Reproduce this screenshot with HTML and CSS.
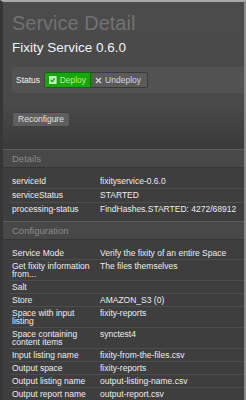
FILE: index.html
```html
<!DOCTYPE html>
<html lang="en">
<head>
  <meta charset="UTF-8" />
  <title>Service Detail</title>
  <link rel="stylesheet" href="styles.css">
</head>
<body>
  <div class="panel">
    <div class="head">
      <h1 class="title">Service Detail</h1>
      <h2 class="subtitle">Fixity Service 0.6.0</h2>

      <div class="status-bar">
        <span class="status-label">Status</span>
        <span class="toggle">
          <button class="tbtn on">
            <svg class="ico" width="8" height="8" viewBox="0 0 8 8">
              <rect x="0.5" y="0.5" width="7" height="7" fill="#b9ecb0" stroke="#dfffd8" stroke-width="1"/>
              <path d="M1.8 4.1 L3.3 5.6 L6.2 2.3" fill="none" stroke="#1b9b14" stroke-width="1.3"/>
            </svg>
            Deploy
          </button><button class="tbtn off">
            <svg class="ico" width="7" height="7" viewBox="0 0 7 7">
              <path d="M1 1 L6 6 M6 1 L1 6" stroke="#cfcfcf" stroke-width="1.6"/>
            </svg>
            Undeploy
          </button>
        </span>
      </div>

      <div class="actions">
        <button class="btn">Reconfigure</button>
      </div>
    </div>

    <div class="section">
      <div class="section-title">Details</div>
      <div class="props loose">
        <div class="row"><span class="key">serviceId</span><span class="val">fixityservice-0.6.0</span></div>
        <div class="row"><span class="key">serviceStatus</span><span class="val">STARTED</span></div>
        <div class="row"><span class="key">processing-status</span><span class="val">FindHashes.STARTED: 4272/68912</span></div>
      </div>
    </div>

    <div class="section">
      <div class="section-title">Configuration</div>
      <div class="props">
        <div class="row"><span class="key">Service Mode</span><span class="val">Verify the fixity of an entire Space</span></div>
        <div class="row"><span class="key">Get fixity information from...</span><span class="val">The files themselves</span></div>
        <div class="row"><span class="key">Salt</span><span class="val"></span></div>
        <div class="row"><span class="key">Store</span><span class="val">AMAZON_S3 (0)</span></div>
        <div class="row"><span class="key">Space with input listing</span><span class="val">fixity-reports</span></div>
        <div class="row"><span class="key">Space containing content items</span><span class="val">synctest4</span></div>
        <div class="row"><span class="key">Input listing name</span><span class="val">fixity-from-the-files.csv</span></div>
        <div class="row"><span class="key">Output space</span><span class="val">fixity-reports</span></div>
        <div class="row"><span class="key">Output listing name</span><span class="val">output-listing-name.csv</span></div>
        <div class="row"><span class="key">Output report name</span><span class="val">output-report.csv</span></div>
      </div>
    </div>
  </div>
</body>
</html>
```

FILE: styles.css
```css
* {
  box-sizing: border-box;
  margin: 0;
  padding: 0;
}

body {
  background: #3a3a3a;
  font-family: "Liberation Sans", Arial, sans-serif;
  color: #e6e6e6;
  overflow: hidden;
}

.panel {
  border-top: 2px solid #a9a9a9;
  border-right: 2px solid #8a8a8a;
  border-left: 3px solid #363636;
  height: 400px;
  background: #3e3e3e;
}

.head {
  background: linear-gradient(#4b4b4b 0, #4a4a4a 100px, #3b3b3b 143px);
  padding: 9px 0 22px 9px;
}

.title {
  font-size: 20px;
  font-weight: normal;
  color: #727272;
  line-height: 24px;
}

.subtitle {
  font-size: 13.5px;
  font-weight: normal;
  color: #f2f2f2;
  line-height: 18px;
  margin-top: 4px;
}

.status-bar {
  display: flex;
  align-items: center;
  gap: 4px;
  margin-top: 10px;
  padding: 0 4px;
  height: 26px;
  background: #525252;
  border-radius: 4px 0 0 4px;
}

.status-label {
  font-size: 8.5px;
  color: #f4f4f4;
}

.toggle {
  display: flex;
}

.tbtn {
  display: flex;
  align-items: center;
  gap: 3px;
  height: 16px;
  padding: 0 4px;
  font-family: "Liberation Sans", Arial, sans-serif;
  font-size: 8.5px;
  border: 1px solid #3a3a3a;
}

.tbtn.on {
  width: 47px;
  background: #19a510;
  border-color: #0e6a08;
  color: #a8f59a;
  border-radius: 2px 0 0 2px;
}

.tbtn.off {
  width: 57px;
  background: #5a5a5a;
  color: #d8d8d8;
  border-left: none;
  border-radius: 0 2px 2px 0;
}

.actions {
  margin-top: 15px;
}

.btn {
  width: 58px;
  height: 15px;
  font-family: "Liberation Sans", Arial, sans-serif;
  font-size: 8.5px;
  color: #e0e0e0;
  background: #5e5e5e;
  border: 1px solid #404040;
  border-radius: 2px;
}

.section {
  border-top: 1px solid #5c5c5c;
}

.section + .section {
  margin-top: 5px;
}

.section-title {
  background: #484848;
  color: #8a8a8a;
  font-size: 9.5px;
  line-height: 17px;
  height: 18px;
  padding-left: 9px;
  border-bottom: 1px solid #353535;
}

.props {
  padding: 7px 0 0 7px;
  font-size: 8.5px;
  color: #ececec;
}

.row {
  display: flex;
  padding: 2.5px 0 1.5px 2px;
  line-height: 8px;
  border-bottom: 1px solid #4d4d4d;
}

.props.loose .row {
  padding-bottom: 2.5px;
}

.row:last-child {
  border-bottom: none;
}

.key {
  width: 88px;
  flex: none;
  padding-right: 6px;
}

.val {
  flex: 1;
}
```
